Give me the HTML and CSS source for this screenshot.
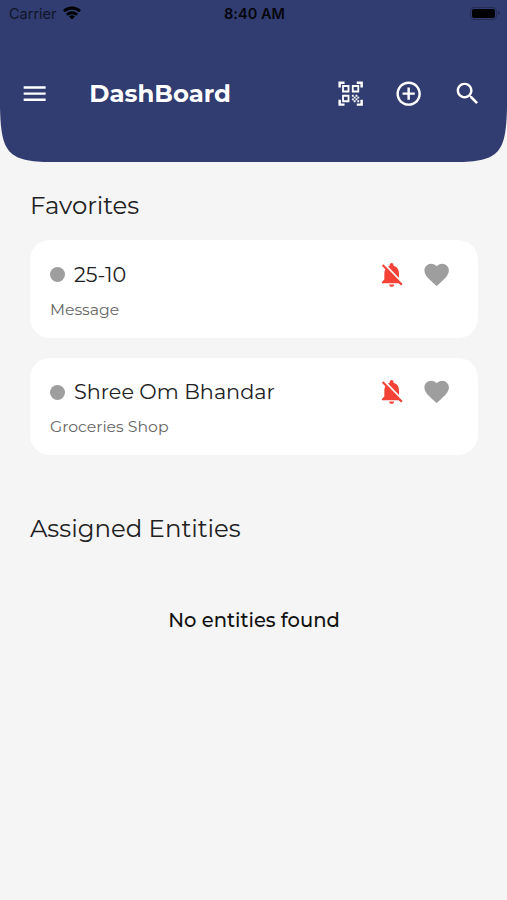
FILE: index.html
```html
<!DOCTYPE html>
<html lang="en">
<head>
<meta charset="utf-8">
<meta name="viewport" content="width=device-width, initial-scale=1">
<title>DashBoard</title>
<link rel="stylesheet" href="styles.css">
</head>
<body>
<svg class="defs" aria-hidden="true">
  <symbol id="bell-off" viewBox="0 0 24 24"><path d="M20 18.69L7.84 6.14 5.27 3.49 4 4.76l2.8 2.8v.01c-.52.99-.8 2.16-.8 3.42v5l-2 2v1h13.73l2 2L21 19.72l-1-1.03zM12 22c1.11 0 2-.89 2-2h-4c0 1.11.89 2 2 2zm6-7.32V11c0-3.08-1.64-5.64-4.5-6.32V4c0-.83-.67-1.5-1.5-1.5s-1.5.67-1.5 1.5v.68c-.15.03-.29.08-.42.12-.1.03-.2.07-.3.11h-.01c-.01 0-.01 0-.02.01-.23.09-.46.2-.68.31 0 0-.01 0-.01.01L18 14.68z"/></symbol>
  <symbol id="heart" viewBox="0 0 24 24"><path d="M12 21.35l-1.45-1.32C5.4 15.36 2 12.28 2 8.5 2 5.42 4.42 3 7.5 3c1.74 0 3.41.81 4.5 2.09C13.09 3.81 14.76 3 16.5 3 19.58 3 22 5.42 22 8.5c0 3.78-3.4 6.86-8.55 11.54L12 21.35z"/></symbol>
</svg>
<header class="header">
  <div class="status">
    <div class="carrier"><span class="carrier-name">Carrier</span>
      <svg class="wifi" viewBox="0 0 18 14" fill="none" stroke="#000" stroke-width="2.9"><path d="M1 5.2a11.5 11.5 0 0 1 16 0M4 8.7a7.2 7.2 0 0 1 10 0"/><path d="M9 13.4 6.1 10.6a4.1 4.1 0 0 1 5.8 0z" fill="#000" stroke="none"/></svg>
    </div>
    <time class="clock">8:40 AM</time>
    <div class="power"><span class="battery"></span><span class="battery-tip"></span></div>
  </div>
  <nav class="toolbar">
    <svg class="icon" viewBox="0 0 24 24"><path d="M3 18h18v-2H3v2zm0-5h18v-2H3v2zm0-7v2h18V6H3z"/></svg>
    <h1 class="title">DashBoard</h1>
    <div class="actions">
      <svg class="icon" viewBox="0 0 24 24"><path d="M9.5 6.5v3h-3v-3h3M11 5H5v6h6V5zm-1.5 9.5v3h-3v-3h3M11 13H5v6h6v-6zm6.5-6.5v3h-3v-3h3M19 5h-6v6h6V5zm-6 8h1.5v1.5H13V13zm1.5 1.5H16V16h-1.5v-1.5zM16 13h1.5v1.5H16V13zm-3 3h1.5v1.5H13V16zm1.5 1.5H16V19h-1.5v-1.5zM16 16h1.5v1.5H16V16zm1.5-1.5H19V16h-1.5v-1.5zm0 3H19V19h-1.5v-1.5zM22 7h-2V4h-3V2h5v5zm0 15v-5h-2v3h-3v2h5zM2 22h5v-2H4v-3H2v5zM2 2v5h2V4h3V2H2z"/></svg>
      <svg class="icon" viewBox="0 0 24 24"><path d="M13 7h-2v4H7v2h4v4h2v-4h4v-2h-4V7zm-1-5C6.48 2 2 6.48 2 12s4.48 10 10 10 10-4.48 10-10S17.52 2 12 2zm0 18c-4.41 0-8-3.59-8-8s3.59-8 8-8 8 3.59 8 8-3.59 8-8 8z"/></svg>
      <svg class="icon" viewBox="0 0 24 24"><path d="M15.5 14h-.79l-.28-.27C15.41 12.59 16 11.11 16 9.5 16 5.91 13.09 3 9.5 3S3 5.91 3 9.5 5.91 16 9.5 16c1.61 0 3.09-.59 4.23-1.57l.27.28v.79l5 4.99L20.49 19l-4.99-5zm-6 0C7.01 14 5 11.99 5 9.5S7.01 5 9.5 5 14 7.01 14 9.5 11.99 14 9.5 14z"/></svg>
    </div>
  </nav>
</header>
<main class="content">
  <h2 class="heading">Favorites</h2>
  <div class="cards">
    <article class="card">
      <div class="row">
        <span class="dot"></span><h3 class="name">25-10</h3>
        <svg class="icon bell"><use href="#bell-off"/></svg>
        <svg class="icon heart"><use href="#heart"/></svg>
      </div>
      <p class="kind">Message</p>
    </article>
    <article class="card">
      <div class="row">
        <span class="dot"></span><h3 class="name">Shree Om Bhandar</h3>
        <svg class="icon bell"><use href="#bell-off"/></svg>
        <svg class="icon heart"><use href="#heart"/></svg>
      </div>
      <p class="kind">Groceries Shop</p>
    </article>
  </div>
  <h2 class="heading assigned">Assigned Entities</h2>
  <p class="empty">No entities found</p>
</main>
</body>
</html>
```
FILE: styles.css
```css
* { box-sizing: border-box; margin: 0; }
body {
  min-height: 900px;
  background: #f5f5f5;
  color: #212123;
  font-family: Montserrat, Inter, sans-serif;
}
.defs { display: none; }
.header {
  height: 162px;
  background: #313c70;
  clip-path: path("M0 0H507V107C506 152 500 162 455 162H52C7 162 1 152 0 107Z");
}
.status {
  display: grid;
  grid-template-columns: 1fr auto 1fr;
  align-items: center;
  height: 28px;
  padding: 0 7px 0 9px;
  color: #05060b;
  font: 15px/28px Inter, sans-serif;
}
.carrier { display: flex; align-items: center; gap: 6px; color: #10152a; }
.carrier-name { font-size: 14.5px; }
.wifi { width: 18px; height: 14px; margin-top: -3px; }
.clock { font-weight: 600; font-size: 14.5px; letter-spacing: .05px; }
.power { display: flex; justify-content: flex-end; align-items: center; gap: 1px; margin-top: -2px; }
.battery { width: 27px; height: 13px; border: 1px solid #252d55; border-radius: 4px; background: #000 content-box; padding: 1px; }
.battery-tip { width: 2px; height: 4px; border-radius: 0 2px 2px 0; background: #252d55; }
.toolbar { display: flex; align-items: center; height: 60px; margin-top: 36px; padding: 0 25px 0 20px; }
.icon { flex: none; width: 29.3px; height: 29.3px; fill: #fff; }
.title { margin: 0 0 2px 40px; color: #fff; font-size: 24.4px; line-height: 32px; font-weight: 700; }
.actions { display: flex; gap: 29.2px; margin-left: auto; }
.content { padding: 27px 29px 0 30px; }
.heading { font-size: 24.4px; line-height: 32px; font-weight: 400; }
.cards { display: grid; gap: 20px; margin-top: 19px; }
.card { height: 97.5px; padding: 19.5px 27px 0 20px; border-radius: 20px; background: #fff; }
.row { display: flex; align-items: center; height: 30px; }
.dot { width: 15px; height: 15px; margin-right: 9px; border-radius: 50%; background: #9e9e9e; }
.name { font-size: 20.75px; line-height: 30px; font-weight: 400; }
.bell { margin-left: auto; fill: #f44336; }
.heart { margin-left: 15px; fill: #9e9e9e; }
.kind { margin-top: 9px; color: #666; font-size: 15.7px; line-height: 22px; font-weight: 400; }
.assigned { margin-top: 57px; }
.empty { margin-top: 63px; color: #111; font-size: 19.5px; line-height: 26px; font-weight: 500; text-align: center; }
```
